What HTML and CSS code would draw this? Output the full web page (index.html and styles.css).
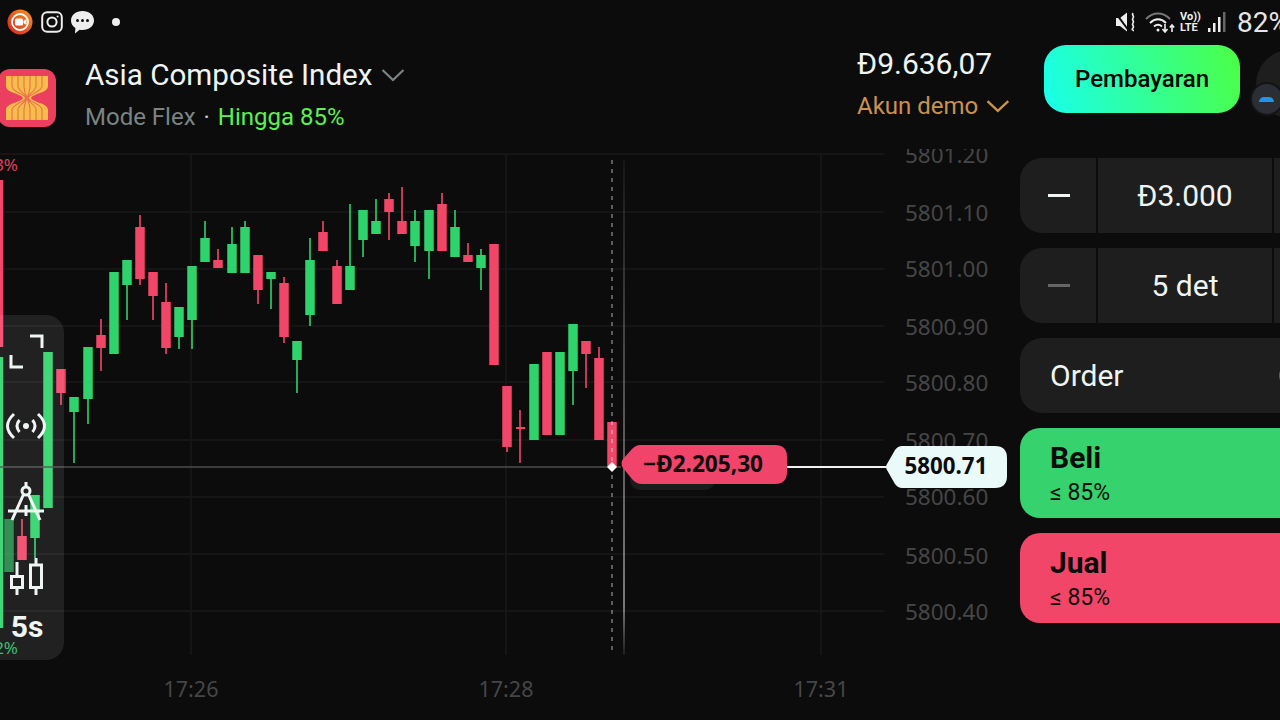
FILE: index.html
```html
<!DOCTYPE html>
<html lang="en">
<head>
    <meta charset="UTF-8">
    <title>Asia Composite Index</title>
    <link rel="stylesheet" href="styles.css">
</head>
<body>
    <div class="screen">
        <!-- Android status bar -->
        <div class="status-bar">
            <div class="status-left">
                <svg width="26" height="26" viewBox="0 0 26 26">
                    <defs>
                        <linearGradient id="rec" x1="0" y1="1" x2="1" y2="0">
                            <stop offset="0" stop-color="#d81f1f"/>
                            <stop offset="1" stop-color="#f59a1e"/>
                        </linearGradient>
                    </defs>
                    <circle cx="13" cy="13" r="12.5" fill="url(#rec)"/>
                    <circle cx="13" cy="13" r="8" fill="none" stroke="#fff" stroke-width="1.8"/>
                    <rect x="8" y="9.5" width="8" height="7" rx="1.5" fill="#fff"/>
                    <path d="M16.5 12l3-2v6l-3-2z" fill="#fff"/>
                </svg>
                <svg class="status-insta" width="22" height="22" viewBox="0 0 22 22" fill="none" stroke="#eee" stroke-width="2">
                    <rect x="1.2" y="1.2" width="19.6" height="19.6" rx="5"/>
                    <circle cx="11" cy="11" r="4.6"/>
                    <circle cx="16.6" cy="5.4" r="1" fill="#eee" stroke="none"/>
                </svg>
                <svg class="status-chat" width="25" height="25" viewBox="0 0 25 25">
                    <path d="M12.5 1C19 1 24 5 24 10.5S19 20 12.5 20c-1 0-2-.1-3-.3L5 23.5l.4-5.500C2.500 16.300 1 13.600 1 10.500 1 5 6 1 12.500 1z" fill="#eee"/>
                    <circle cx="7.500" cy="10.500" r="1.500" fill="#111"/>
                    <circle cx="12.500" cy="10.500" r="1.500" fill="#111"/>
                    <circle cx="17.500" cy="10.500" r="1.500" fill="#111"/>
                </svg>
                <span class="status-dot"></span>
            </div>
            <div class="status-right">
                <svg width="22" height="22" viewBox="0 0 22 22">
                    <path d="M1 7h4l7-5.500v19L5 15H1z" fill="#eee"/>
                    <path d="M0 1l14 19" stroke="#0c0c0d" stroke-width="2"/>
                    <path d="M18 2c-2 2 2 3 0 5s2 3 0 5 2 3 0 5 1 2 0 3" fill="none" stroke="#eee" stroke-width="1.700"/>
                </svg>
                <svg class="status-wifi" width="30" height="22" viewBox="0 0 30 22" fill="none" stroke-width="2">
                    <path d="M1 8c7-7.500 17-7.500 24 0" stroke="#777"/>
                    <path d="M5 12c5-5 11-5 16 0" stroke="#eee"/>
                    <path d="M9 15.500c3-2.500 5-2.500 8 0" stroke="#eee"/>
                    <circle cx="13" cy="19" r="1.500" fill="#eee"/>
                    <path d="M20 13v8M17.500 18l2.500 3 2.500-3" stroke="#eee" stroke-width="1.600"/>
                    <path d="M27 21v-7M24.800 16.500l2.200-2.500 2.200 2.500" stroke="#eee" stroke-width="1.600"/>
                </svg>
                <div class="status-volte"><span>Vo))</span><span>LTE</span></div>
                <svg class="status-signal" width="18" height="22" viewBox="0 0 18 22" fill="#eee">
                    <rect x="0" y="17" width="2.500" height="4"/>
                    <rect x="5" y="12" width="2.500" height="9"/>
                    <rect x="10" y="6" width="2.500" height="15"/>
                    <rect x="15" y="1" width="2.500" height="20" fill="#666"/>
                </svg>
                <span class="status-battery">82%</span>
            </div>
        </div>

        <!-- Asset + account header -->
        <div class="top-bar">
            <svg class="asset-logo" width="58" height="58" viewBox="0 0 58 58">
                <rect width="58" height="58" rx="12" fill="#ea3f5f"/>
                <path d="M8 7H50V17C50 24 36 24 33 29 36 34 50 34 50 41V51H8V41C8 34 22 34 25 29 22 24 8 24 8 17Z" fill="#f7bd4a"/>
                <path d="M14 7V17C14 23 25 24 28 29 25 34 14 35 14 41V51M20 7V17C20 22 27 24 29 29 27 34 20 36 20 41V51M26 7V18C26 22 28 26 29 29 28 32 26 36 26 40V51M32 7V18C32 22 30 26 29 29 30 32 32 36 32 40V51M38 7V17C38 22 31 24 29 29 31 34 38 36 38 41V51M44 7V17C44 23 33 24 30 29 33 34 44 35 44 41V51" fill="none" stroke="#e8734e" stroke-width="1.100"/>
            </svg>
            <div class="asset-info">
                <div class="asset-name">
                    Asia Composite Index
                    <svg width="24" height="14" viewBox="0 0 24 14" fill="none" stroke="#7b8383" stroke-width="2.200"><path d="M1.500 2L12 12 22.500 2"/></svg>
                </div>
                <div class="asset-mode">
                    <span class="mode-name">Mode Flex</span>
                    <span class="mode-sep">·</span>
                    <span class="mode-payout">Hingga 85%</span>
                </div>
            </div>
            <div class="account">
                <div class="account-balance">Đ9.636,07</div>
                <div class="account-type">
                    Akun demo
                    <svg width="24" height="14" viewBox="0 0 24 14" fill="none" stroke="#c9924f" stroke-width="2.400"><path d="M1.500 2L12 12 22.500 2"/></svg>
                </div>
            </div>
            <button class="pay-button">Pembayaran</button>
            <div class="avatar">
                <div class="avatar-badge"><span class="badge-arc"></span></div>
            </div>
        </div>

        <div class="main">
            <div class="chart">
                <svg class="chart-svg" width="1020" height="571" viewBox="0 149 1020 571">
                    <defs>
                        <linearGradient id="fade" gradientUnits="userSpaceOnUse" x1="0" y1="160" x2="0" y2="655">
                            <stop offset="0" stop-color="#fff" stop-opacity=".06"/>
                            <stop offset=".5" stop-color="#fff" stop-opacity=".4"/>
                            <stop offset=".9" stop-color="#fff" stop-opacity=".6"/>
                            <stop offset="1" stop-color="#fff" stop-opacity=".1"/>
                        </linearGradient>
                    </defs>

                    <!-- grid -->
                    <path class="grid" d="M0 154H884M0 212H884M0 269H884M0 326H884M0 382H884M0 440H884M0 497H884M0 554H884M0 611H884M191 154V655M506 154V655M821 154V655"/>

                    <!-- axis labels -->
                    <g class="axis-label">
                        <text x="905" y="163">5801.20</text>
                        <text x="905" y="221">5801.10</text>
                        <text x="905" y="277">5801.00</text>
                        <text x="905" y="335">5800.90</text>
                        <text x="905" y="391">5800.80</text>
                        <text x="905" y="449">5800.70</text>
                        <text x="905" y="505">5800.60</text>
                        <text x="905" y="564">5800.50</text>
                        <text x="905" y="620">5800.40</text>
                    </g>
                    <g class="time-label">
                        <text x="191" y="697">17:26</text>
                        <text x="506" y="697">17:28</text>
                        <text x="821" y="697">17:31</text>
                    </g>

                    <!-- candles: wick paths then body paths -->
                    <path class="wick up" d="M88 347V424M127 260V320M179 307V349M192 266V349M205 221V238M232 227V244M245 221V227M271 272V309M297 341V393M310 238V326M350 204V266M363 210V257M376 199V221M415 210V262M429 210V279M455 210V227M481 249V290M573 324V405M74 397V463M35 495V558"/>
                    <path class="wick down" d="M61 369V405M101 319V371M140 215V285M153 272V320M166 283V354M218 249V260M258 255V304M284 277V343M323 221V232M337 260V266M389 193V240M402 187V221M442 193V204M468 243V255M507 386V452M520 410V463M586 341V388M599 347V358M22 519V536"/>
                    <path class="body up" d="M-1.500 357V628M48 352V508M88 347V399M114 272V354M127 260V285M179 307V337M192 266V320M205 238V262M232 244V273M245 227V273M271 272V279M297 341V360M310 260V315M350 266V290M363 210V240M376 221V234M415 221V246M429 210V251M455 227V257M481 255V268M534 364V440M560 352V435M573 324V371M74 397V412M35 495V538"/>
                    <path class="body up dim" d="M9 519V572"/>
                    <path class="body down" d="M-1.500 180V347M61 369V393M101 335V348M140 227V279M153 272V296M166 302V348M218 260V268M258 255V290M284 283V337M323 232V251M337 266V304M389 199V212M402 221V234M442 204V251M468 255V262M494 244V365M507 386V447M547 352V435M586 341V354M599 358V440M612 422V467M22 536V560"/>
                    <path class="doji" d="M516 428H525"/>

                    <text class="edge-label down-text" x="18" y="171" text-anchor="end">83%</text>
                    <text class="edge-label up-text" x="18" y="654" text-anchor="end">82%</text>

                    <!-- current price + open trade -->
                    <path class="price-line" d="M0 467H621"/>
                    <path class="price-line bright" d="M787 467H886"/>
                    <path class="time-dash" d="M612 160V650"/>
                    <path class="time-line" d="M624 160V655"/>
                    <path class="marker" d="M612 462l5 5-5 5-5-5z"/>
                    <rect class="tag-shadow" x="630" y="470" width="85" height="20" rx="10"/>
                    <path class="trade-tag" d="M640 445H775Q787 445 787 457V472Q787 484 775 484H642Q636 484 632 479L623 468Q620 463 623 459L632 449Q636 445 640 445Z"/>
                    <text class="trade-text" x="703" y="472" text-anchor="middle">−Đ2.205,30</text>
                    <path class="price-tag" d="M902 446H995Q1007 446 1007 458V476Q1007 488 995 488H902Q898 488 895 484L887 470Q885 467 887 464L895 450Q898 446 902 446Z"/>
                    <text class="price-text" x="946" y="474" text-anchor="middle">5800.71</text>
                </svg>

                <!-- floating chart tools -->
                <div class="tools">
                    <svg class="tool" viewBox="0 0 44 44"><path d="M26 6H38V18M7 25V37H19"/></svg>
                    <svg class="tool" viewBox="0 0 44 44">
                        <path d="M10 9Q-3 21 10 33M15.500 15Q10.500 21 15.500 27M34 9Q47 21 34 33M28.500 15Q33.500 21 28.500 27"/>
                        <circle class="tool-fill" cx="22" cy="21" r="3"/>
                    </svg>
                    <svg class="tool" viewBox="0 0 44 44">
                        <circle cx="22" cy="11" r="4"/>
                        <path d="M22 2V7M19.500 14.500L8 40M24.500 14.500L36 40M4 31H40M22 25V36"/>
                    </svg>
                    <svg class="tool" viewBox="0 0 44 44">
                        <rect x="7.500" y="21.500" width="11" height="11"/>
                        <rect x="26.500" y="10" width="11" height="22.500"/>
                        <path d="M13 7V21M13 33V40M32 3V10M32 33V40"/>
                    </svg>
                    <div class="tool-label">5s</div>
                </div>
            </div>

            <!-- trade panel, runs past the right edge of the screen -->
            <div class="trade-panel">
                <div class="stepper">
                    <div class="step"><span class="step-minus"></span></div>
                    <div class="step-value">Đ3.000</div>
                    <div class="step step-end"></div>
                </div>
                <div class="stepper">
                    <div class="step"><span class="step-minus off"></span></div>
                    <div class="step-value">5 det</div>
                    <div class="step step-end"></div>
                </div>
                <div class="order-row">
                    <span>Order</span>
                    <span class="order-value">O</span>
                </div>
                <div class="trade-button buy">
                    <div class="trade-title">Beli</div>
                    <div class="trade-sub">≤ 85%</div>
                </div>
                <div class="trade-button sell">
                    <div class="trade-title">Jual</div>
                    <div class="trade-sub">≤ 85%</div>
                </div>
            </div>
        </div>
    </div>
</body>
</html>
```

FILE: styles.css
```css
body {
    margin: 0;
    background-color: #0c0c0d;
    color: #eef5f3;
    font-family: Roboto, "Liberation Sans", sans-serif;
}

.screen {
    width: 1280px;
    height: 720px;
    overflow: hidden;
    display: flex;
    flex-direction: column;
}

/* Status bar */
.status-bar {
    height: 44px;
    flex-shrink: 0;
    display: flex;
    justify-content: space-between;
    align-items: center;
    padding: 0 0 0 7px;
}

.status-left,
.status-right {
    display: flex;
    align-items: center;
}

.status-right svg {
    flex-shrink: 0;
}

.status-insta {
    margin-left: 8px;
}

.status-chat {
    margin-left: 7px;
}

.status-dot {
    width: 8px;
    height: 8px;
    margin-left: 17px;
    border-radius: 50%;
    background-color: #eee;
}

.status-right {
    width: 165px;
    flex-shrink: 0;
    white-space: nowrap;
}

.status-wifi {
    margin-left: 8px;
}

.status-volte {
    display: flex;
    flex-direction: column;
    width: 20px;
    flex-shrink: 0;
    margin-left: 5px;
    font-size: 11px;
    font-weight: 700;
    line-height: 11px;
    color: #eee;
}

.status-signal {
    margin-left: 8px;
}

.status-battery {
    margin-left: 11px;
    font-size: 28px;
    color: #e6e6e6;
}

/* Header */
.top-bar {
    height: 105px;
    flex-shrink: 0;
    display: flex;
    align-items: flex-start;
}

.asset-logo {
    margin: 25px 0 0 -2px;
    flex-shrink: 0;
}

.asset-info {
    margin: 13px 0 0 29px;
}

.asset-name {
    display: flex;
    align-items: center;
    gap: 9px;
    font-size: 29.600px;
    line-height: 36px;
}

.asset-mode {
    margin-top: 9px;
    font-size: 24px;
    line-height: 30px;
}

.mode-name {
    color: #7b8383;
}

.mode-sep {
    margin: 0 2px;
    color: #ccc;
}

.mode-payout {
    color: #5bf24d;
}

.account {
    margin: 2px 0 0 auto;
    width: 153px;
    flex-shrink: 0;
}

.account-balance {
    font-size: 30px;
    line-height: 36px;
}

.account-type {
    display: flex;
    align-items: center;
    gap: 8px;
    margin-top: 9px;
    font-size: 24px;
    line-height: 30px;
    color: #c9924f;
    white-space: nowrap;
}

.pay-button {
    width: 196px;
    height: 68px;
    margin: 1px 0 0 34px;
    flex-shrink: 0;
    border: 0;
    border-radius: 22px;
    background: linear-gradient(75deg, #18ffec, #4cff44);
    color: #050505;
    font-family: inherit;
    font-size: 24px;
    font-weight: 500;
}

.avatar {
    position: relative;
    width: 68px;
    height: 68px;
    margin: 6px -44px 0 16px;
    flex-shrink: 0;
    border-radius: 50%;
    background-color: #1e1e1e;
}

.avatar-badge {
    position: absolute;
    left: -4px;
    top: 34px;
    width: 30px;
    height: 30px;
    box-sizing: border-box;
    border-radius: 50%;
    background-color: #2b2e34;
    box-shadow: 0 0 0 2px #141416;
}

.badge-arc {
    position: absolute;
    left: 7px;
    top: 13px;
    width: 15px;
    height: 5px;
    border-radius: 8px 8px 0 0;
    background-color: #1e96e8;
}

/* Chart */
.main {
    flex: 1;
    display: flex;
    min-height: 0;
}

.chart {
    position: relative;
    width: 1020px;
    flex-shrink: 0;
}

.chart-svg {
    display: block;
}

.grid {
    fill: none;
    stroke: #18181a;
    stroke-width: 1.5;
}

.axis-label text {
    font-family: "Noto Sans", sans-serif;
    font-size: 22.500px;
    fill: #464646;
}

.time-label text {
    font-family: "Noto Sans", sans-serif;
    font-size: 21.500px;
    fill: #464646;
    text-anchor: middle;
}

.wick,
.body,
.doji {
    fill: none;
}

.wick {
    stroke-width: 1.600;
}

.body {
    stroke-width: 9.500;
}

.doji {
    stroke: #f24668;
    stroke-width: 2;
}

.up {
    stroke: #2fd36b;
}

.down {
    stroke: #f24668;
}

.dim {
    opacity: .6;
}

.edge-label {
    font-family: "Noto Sans", sans-serif;
    font-size: 17px;
}

.down-text {
    fill: #e0405c;
}

.up-text {
    fill: #2fb763;
}

.price-line {
    stroke: #4c4c4c;
    stroke-width: 1.500;
}

.price-line.bright {
    stroke: #f2f2f2;
    stroke-width: 2;
}

.time-dash {
    stroke: rgba(255, 255, 255, 0.45);
    stroke-width: 1.500;
    stroke-dasharray: 4 5;
}

.time-line {
    stroke: url(#fade);
    stroke-width: 1.500;
}

.marker {
    fill: #fff;
}

.tag-shadow {
    fill: #1c1c1d;
}

.trade-tag {
    fill: #f0446a;
}

.trade-text,
.price-text {
    font-family: "Noto Sans", sans-serif;
    font-weight: 700;
    fill: #0c0c0d;
}

.trade-text {
    font-size: 22.600px;
}

.price-tag {
    fill: #eafaf8;
}

.price-text {
    font-size: 22.300px;
}

/* Floating tools */
.tools {
    position: absolute;
    left: 0;
    top: 166px;
    width: 64px;
    height: 345px;
    box-sizing: border-box;
    padding: 15px 12px 0 0;
    display: flex;
    flex-direction: column;
    align-items: center;
    gap: 31px;
    border-radius: 0 18px 18px 0;
    background-color: rgba(255, 255, 255, 0.09);
}

.tool {
    width: 44px;
    height: 44px;
    flex-shrink: 0;
    fill: none;
    stroke: #eef5f3;
    stroke-width: 3;
}

.tool-fill {
    fill: #eef5f3;
    stroke: none;
}

.tool-label {
    margin-top: -20px;
    padding-left: 2px;
    font-size: 30px;
    font-weight: 700;
    line-height: 34px;
}

/* Trade panel */
.trade-panel {
    width: 333px;
    flex-shrink: 0;
    padding-top: 9px;
    display: flex;
    flex-direction: column;
    gap: 15px;
    font-size: 30px;
}

.stepper {
    height: 75px;
    display: grid;
    grid-template-columns: 76px 174px 81px;
    gap: 2px;
}

.step,
.step-value,
.order-row {
    background-color: #1e1e1e;
}

.step {
    display: flex;
    align-items: center;
    padding-left: 28px;
    border-radius: 22px 0 0 22px;
}

.step-end {
    border-radius: 0 22px 22px 0;
}

.step-minus {
    width: 22px;
    height: 2.500px;
    background-color: #eef5f3;
}

.step-minus.off {
    background-color: #666;
}

.step-value {
    display: flex;
    align-items: center;
    justify-content: center;
}

.order-row {
    height: 75px;
    box-sizing: border-box;
    display: flex;
    align-items: center;
    justify-content: space-between;
    padding-left: 30px;
    border-radius: 22px;
}

.order-value {
    width: 75px;
}

.trade-button {
    height: 90px;
    box-sizing: border-box;
    padding: 13px 0 0 30px;
    border-radius: 20px;
    color: #0c0c0d;
}

.buy {
    background-color: #35d26d;
}

.sell {
    background-color: #f24668;
}

.trade-title {
    font-size: 30px;
    font-weight: 700;
    line-height: 34px;
}

.trade-sub {
    margin-top: 1px;
    font-size: 23px;
    line-height: 34px;
}
```
